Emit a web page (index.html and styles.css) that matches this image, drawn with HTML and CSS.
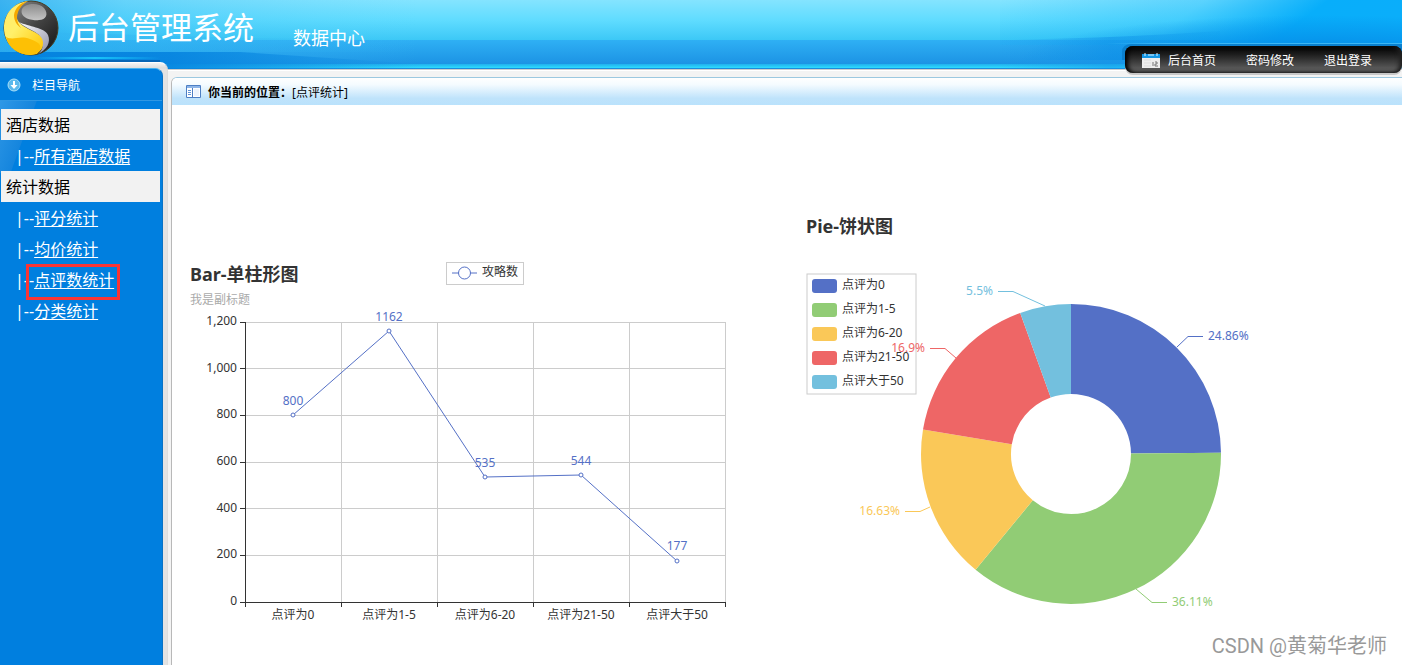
FILE: index.html
```html
<!DOCTYPE html>
<html lang="zh-CN">
<head>
<meta charset="utf-8">
<title>后台管理系统</title>
<link rel="stylesheet" href="styles.css">
</head>
<body>
<header class="top">
  <svg class="art art-left" width="420" height="69" viewBox="0 0 420 69" aria-hidden="true">
    <defs>
      <linearGradient id="l1" x1="0" x2="1" y1="0" y2="0"><stop offset="0" stop-color="#1397e8" stop-opacity=".65"/><stop offset=".3" stop-color="#2fb5f2" stop-opacity=".35"/><stop offset="1" stop-color="#4ccaf8" stop-opacity="0"/></linearGradient>
      <linearGradient id="l2" x1="0" x2="1" y1="0" y2="0"><stop offset="0" stop-color="#0583df"/><stop offset=".4" stop-color="#0583df" stop-opacity=".9"/><stop offset="1" stop-color="#0583df" stop-opacity="0"/></linearGradient>
      <linearGradient id="l3" x1="0" x2="1" y1="0" y2="0"><stop offset="0" stop-color="#18c5fa" stop-opacity="0"/><stop offset=".5" stop-color="#18c5fa"/><stop offset="1" stop-color="#18c5fa" stop-opacity="0"/></linearGradient>
      <linearGradient id="l4" x1="0" x2="1" y1="0" y2="0"><stop offset="0" stop-color="#34b5f2" stop-opacity=".6"/><stop offset="1" stop-color="#34b5f2" stop-opacity="0"/></linearGradient>
    </defs>
    <path d="M0 0H420V69H0Z" fill="url(#l1)"/>
    <path d="M0 31L250 38L420 40V52H0Z" fill="url(#l4)"/>
    <path d="M0 52H240L420 64V69H0Z" fill="url(#l2)"/>
    <rect x="30" y="57" width="130" height="2" fill="url(#l3)"/>
    <path d="M0 61H160" stroke="#0765b5" stroke-width="2"/>
  </svg>
  <svg class="art art-right" width="402" height="69" viewBox="0 0 402 69" aria-hidden="true">
    <defs>
      <linearGradient id="r1" x1="0" x2="1" y1="0" y2=".15"><stop offset="0" stop-color="#10b2fa" stop-opacity="0"/><stop offset=".5" stop-color="#10b2fa" stop-opacity=".35"/><stop offset=".8" stop-color="#08aefa"/><stop offset="1" stop-color="#0aaefa"/></linearGradient>
      <linearGradient id="r2" x1="0" x2="1" y1="0" y2="0"><stop offset="0" stop-color="#1d98e8" stop-opacity="0"/><stop offset=".5" stop-color="#1496e9" stop-opacity=".55"/><stop offset="1" stop-color="#0795eb" stop-opacity=".1"/></linearGradient>
      <radialGradient id="r3" cx=".8" cy="1" r=".75"><stop offset="0" stop-color="#058ae6"/><stop offset=".4" stop-color="#058ae6" stop-opacity=".7"/><stop offset="1" stop-color="#058ae6" stop-opacity="0"/></radialGradient>
      <linearGradient id="r4" x1="0" x2="1" y1="0" y2="0"><stop offset="0" stop-color="#3cb7f4" stop-opacity="0"/><stop offset=".2" stop-color="#3cb7f4"/></linearGradient>
    </defs>
    <path d="M0 0H402V45H0Z" fill="url(#r1)"/>
    <path d="M0 40Q120 38 220 31V69H0Z" fill="url(#r2)"/>
    <path d="M0 0H402V60H0Z" fill="url(#r3)"/>
    <path d="M122 52Q122 44 132 44H402V60H122Z" fill="#0a7ac5" opacity=".75"/>
    <rect x="105" y="43" width="297" height="1" fill="url(#r4)"/>
  </svg>
  <div class="brand">
    <svg class="logo" width="58" height="56" viewBox="0 0 58 56" role="img" aria-label="标志">
      <defs>
        <linearGradient id="dark" x1="0" x2="1" y1="0" y2="1"><stop offset="0" stop-color="#999"/><stop offset=".5" stop-color="#444"/><stop offset="1" stop-color="#111"/></linearGradient>
        <linearGradient id="gold" x1="0" x2="1" y1="0" y2="1"><stop offset="0" stop-color="#ffe96a"/><stop offset=".4" stop-color="#fff06a"/><stop offset="1" stop-color="#ffc400"/></linearGradient>
        <linearGradient id="gloss" x1="0" x2="0" y1="0" y2="1"><stop offset="0" stop-color="#8c8c8c"/><stop offset="1" stop-color="#c4c4c4"/></linearGradient>
        <linearGradient id="silver" x1="0" x2="1" y1="0" y2="1"><stop offset="0" stop-color="#fff"/><stop offset="1" stop-color="#8f90a8"/></linearGradient>
      </defs>
      <circle cx="29" cy="28" r="27" fill="url(#dark)" stroke="#463c20"/>
      <path d="M26 1C11 3 2 14 2 28C2 43 14 55 29 55C39 54 43 46 41 39C37 31 19 29 15 19C14 11 18 5 26 1Z" fill="url(#gold)"/>
      <path d="M26 1C18 3 13 8 12 15C12 21 15 25 19 28C17 25 15 22 15 18C15 11 19 5 26 1Z" fill="#f5a800"/>
      <path d="M17 22C25 30 40 32 41 42C41 47 40 51 36 54C45 50 49 42 46 35C42 27 27 27 17 22Z" fill="url(#silver)"/>
      <path d="M20 9C23 3 37 2 42 8C47 14 44 20 37 20C30 21 17 18 20 9Z" fill="url(#gloss)"/>
      <path d="M4 37C12 41 17 35 28 39C40 43 41 48 35 54C20 57 7 50 4 37Z" fill="#fdc005"/>
    </svg>
    <h1 class="brand-name">后台管理系统</h1>
    <span class="brand-sub">数据中心</span>
  </div>
  <nav class="quick">
    <a class="quick-link" href="#">
      <svg width="18" height="16" viewBox="0 0 18 16" aria-hidden="true"><path d="M0 2H18V15H0Z" fill="#eee"/><path d="M0 1H18V5H0Z" fill="#1597e5"/><path d="M3 0V3M15 0V3M6 2H12" stroke="#dff4ff"/><path d="M2 7H9M2 10H9M2 13H9" stroke="#ddd"/><path d="M11 9V13M13 9H15V11H13V13H16" stroke="#777" fill="none"/></svg>
      后台首页</a>
    <a class="quick-link" href="#">密码修改</a>
    <a class="quick-link" href="#">退出登录</a>
  </nav>
</header>

<div class="body">
  <aside class="side">
    <div class="side-panel">
      <h2 class="side-title">
        <svg width="14" height="14" viewBox="0 0 14 14" aria-hidden="true"><circle cx="7" cy="7" r="6" fill="#5bb9ec" stroke="#a8def8"/><path d="M7 3V9" stroke="#fff" stroke-width="2"/><path d="M3.500 7H10.500L7 11Z" fill="#fff"/></svg>
        栏目导航</h2>
      <div class="menu">
        <h3 class="menu-head">酒店数据</h3>
        <div class="menu-item">|--<a href="#">所有酒店数据</a></div>
        <h3 class="menu-head">统计数据</h3>
        <div class="menu-item">|--<a href="#">评分统计</a></div>
        <div class="menu-item">|--<a href="#">均价统计</a></div>
        <div class="menu-item marked">|--<a href="#">点评数统计</a></div>
        <div class="menu-item">|--<a href="#">分类统计</a></div>
      </div>
    </div>
  </aside>

  <main class="content">
    <div class="crumb">
      <svg width="15" height="13" viewBox="0 0 15 13" aria-hidden="true"><path d="M.5 .5H14.500V12.500H.5Z" fill="#fff" stroke="#4d7fc4"/><path d="M1 1H14V3H1Z" fill="#8db5e8"/><path d="M6.500 3V12" stroke="#4d7fc4"/><path d="M2 5.500H5M2 7.500H5M2 9.500H5" stroke="#5f93d6"/><path d="M8 4H13V11H8Z" fill="#edf4fd"/></svg>
      <b>你当前的位置：</b><span>[点评统计]</span>
    </div>
    <div class="charts">
      <svg class="chart" width="616" height="380" viewBox="172 255 616 380" role="img" aria-label="单柱形图">
        <text class="title" x="190" y="281">Bar-单柱形图</text>
        <text class="subtitle" x="190" y="304">我是副标题</text>
        <rect x="446.500" y="262.500" width="77" height="22" fill="#fff" stroke="#ccc"/>
        <path class="series" d="M452 273H477"/><circle class="dot" cx="464.500" cy="273" r="6"/>
        <text x="482" y="276">攻略数</text>
        <path class="grid" d="M246 322.500H726M246 368.500H726M246 415.500H726M246 462.500H726M246 508.500H726M246 555.500H726M341.500 322V602M437.500 322V602M533.500 322V602M629.500 322V602M725.500 322V602"/>
        <path class="axis" d="M245.500 322V607M240 602.500H726M240 322.500H245M240 368.500H245M240 415.500H245M240 462.500H245M240 508.500H245M240 555.500H245M341.500 602V607M437.500 602V607M533.500 602V607M629.500 602V607M725.500 602V607"/>
        <g class="end"><text x="237" y="325">1,200</text><text x="237" y="372">1,000</text><text x="237" y="418">800</text><text x="237" y="465">600</text><text x="237" y="512">400</text><text x="237" y="558">200</text><text x="237" y="605">0</text></g>
        <g class="mid"><text x="293" y="619">点评为0</text><text x="389" y="619">点评为1-5</text><text x="485" y="619">点评为6-20</text><text x="581" y="619">点评为21-50</text><text x="677" y="619">点评大于50</text></g>
        <path class="series" d="M293 415L389 331L485 477L581 475L677 561"/>
        <circle class="dot" cx="293" cy="415" r="2"/><circle class="dot" cx="389" cy="331" r="2"/><circle class="dot" cx="485" cy="477" r="2"/><circle class="dot" cx="581" cy="475" r="2"/><circle class="dot" cx="677" cy="561" r="2"/>
        <g class="mid c-blue"><text x="293" y="405">800</text><text x="389" y="321">1162</text><text x="485" y="467">535</text><text x="581" y="465">544</text><text x="677" y="550">177</text></g>
      </svg>
      <svg class="chart" width="614" height="430" viewBox="788 205 614 430" role="img" aria-label="饼状图">
        <text class="title" x="806" y="233">Pie-饼状图</text>
        <rect x="807" y="274" width="109" height="120" fill="#fff" stroke="#ccc"/>
        <rect class="c-blue" x="812" y="279" width="25" height="14" rx="3"/><text x="842" y="289">点评为0</text>
        <rect class="c-green" x="812" y="303" width="25" height="14" rx="3"/><text x="842" y="313">点评为1-5</text>
        <rect class="c-yellow" x="812" y="327" width="25" height="14" rx="3"/><text x="842" y="337">点评为6-20</text>
        <rect class="c-red" x="812" y="351" width="25" height="14" rx="3"/><text x="842" y="361">点评为21-50</text>
        <rect class="c-cyan" x="812" y="375" width="25" height="14" rx="3"/><text x="842" y="385">点评大于50</text>
        <path class="c-blue" d="M1071 304A150 150 0 0 1 1221 452.700L1131 453.500A60 60 0 0 0 1071 394Z"/>
        <path class="c-green" d="M1221 452.700A150 150 0 0 1 975.600 569.700L1032.800 500.300A60 60 0 0 0 1131 453.500Z"/>
        <path class="c-yellow" d="M975.600 569.700A150 150 0 0 1 923 429.600L1011.800 444.200A60 60 0 0 0 1032.800 500.300Z"/>
        <path class="c-red" d="M923 429.600A150 150 0 0 1 1020.200 312.900L1050.700 397.500A60 60 0 0 0 1011.800 444.200Z"/>
        <path class="c-cyan" d="M1020.200 312.900A150 150 0 0 1 1071 304V394A60 60 0 0 0 1050.700 397.500Z"/>
        <g fill="none"><path stroke="#5470c6" d="M1177 347L1188 336.500H1203"/><path stroke="#91cc75" d="M1136 589L1152 602.500H1167"/><path stroke="#fac858" d="M930 507L920 511.500H905"/><path stroke="#ee6666" d="M956 358L945 348.500H930"/><path stroke="#73c0de" d="M1045 306L1013 291.500H998"/></g>
        <text class="c-blue" x="1208" y="340">24.86%</text>
        <text class="c-green" x="1172" y="606">36.11%</text>
        <g class="end"><text class="c-yellow" x="900" y="515">16.63%</text><text class="c-red" x="925" y="352">16.9%</text><text class="c-cyan" x="993" y="295">5.5%</text></g>
      </svg>
    </div>
    <div class="watermark">CSDN @黄菊华老师</div>
  </main>
</div>
</body>
</html>
```
FILE: styles.css
```css
*, *::after { box-sizing: border-box; }
body {
  margin: 0;
  min-height: 100vh;
  display: flex;
  flex-direction: column;
  background: #f3f3f3;
  font-family: "Noto Sans", "Noto Sans CJK SC", sans-serif;
  font-size: 12px;
  color: #000;
}
h1, h2, h3 { margin: 0; font-weight: 400; }

.top {
  position: relative;
  height: 71px;
  display: flex;
  justify-content: space-between;
  background: linear-gradient(#84e4ff 0, #60dcff 20px, #3cc8f6 40px, #2fb0f4 40px, #1c93e4 64px, #20b0ee 64px, #2edcff 68px, #1a8ddc 68px, #1a8ddc 69px, #ccc 69px, #ccc 70px, #fff 70px);
}
.art { position: absolute; top: 0; }
.art-left { left: 0; }
.art-right { right: 0; }
.brand { position: relative; display: flex; align-items: flex-start; color: #fff; }
.logo { margin-left: 2px; }
.brand-name {
  margin-left: 8px;
  font-size: 31px;
  line-height: 54px;
  font-weight: 400;
}
.brand-sub { margin-left: 39px; padding-top: 25px; font-size: 18px; line-height: 26px; }
.quick {
  position: relative;
  align-self: flex-end;
  width: 277px;
  height: 27px;
  margin-bottom: -2px;
  padding: 2px 0 0 17px;
  display: flex;
  align-items: center;
  gap: 30px;
  border-radius: 8px;
  background: linear-gradient(#000, #1c1c1c 30%, #6c6c6c);
  box-shadow: inset 3px 0 4px #000, inset -3px 0 4px #222, 0 2px 0 #c8c8c8;
}
.quick-link {
  display: flex;
  align-items: center;
  gap: 8px;
  line-height: 18px;
  color: #fff;
  text-decoration: none;
}

.body { flex: 1; display: flex; }
.side {
  position: relative;
  width: 168px;
  flex: none;
  margin-top: -9px;
  padding: 5px 4px 0 0;
  display: flex;
  border-top: 1px solid #fff;
  border-right: 1px solid #ddd;
  border-radius: 0 8px 0 0;
  background: linear-gradient(#f4f4f4, #ddd 5px, #e2e2e2 6px);
}
.side-panel {
  flex: 1;
  border-top: 1px solid #46b2ef;
  border-right: 1px solid #0872c6;
  border-radius: 0 8px 0 0;
  background:
    linear-gradient(110deg, #2f98e6 0, #1585dd 34px, transparent 35px) 0 32px / 100% 72px no-repeat,
    #007fdf;
}
.side-title {
  height: 32px;
  padding-left: 7px;
  display: flex;
  align-items: center;
  gap: 11px;
  border-bottom: 1px solid #2f97e3;
  border-radius: 0 8px 0 0;
  background: #007fdf;
  font-size: 12px;
  color: #fff;
}
.menu { padding: 8px 2px 0 1px; font-size: 16px; line-height: 31px; }
.menu-head { padding: 1px 5px 0; font-size: 16px; line-height: 30px; background: #f2f2f2; }
.menu-item { height: 31px; padding: 1px 0 0 14px; color: #fff; white-space: nowrap; }
.menu-item a { color: #fff; text-underline-offset: 2px; }
.marked { position: relative; }
.marked::after {
  content: "";
  position: absolute;
  left: 25px;
  top: 0;
  width: 94px;
  height: 36px;
  border: 3px solid #fa3434;
}

.content {
  position: relative;
  flex: 1;
  min-width: 0;
  margin: 6px 0 0 3px;
  border-top: 1px solid #9cc8e0;
  border-left: 1px solid #b8b8b8;
  border-radius: 6px 0 0 0;
  background: #fff;
  overflow: hidden;
}
.crumb {
  height: 27px;
  padding-left: 14px;
  display: flex;
  align-items: center;
  background: linear-gradient(#fff, #f4fbff 25%, #bfe3fb 75%, #bae2fc);
}
.crumb svg { margin-right: 7px; }
.charts { padding-top: 100px; display: flex; align-items: flex-end; }
.chart { flex: none; display: block; fill: #333; font-size: 12px; }
.title { font-size: 18px; font-weight: 700; }
.subtitle { fill: #aaa; }
.mid { text-anchor: middle; }
.end { text-anchor: end; }
.grid { stroke: #ccc; fill: none; }
.axis { stroke: #333; fill: none; }
.series { stroke: #5470c6; fill: none; }
.dot { stroke: #5470c6; fill: #fff; }
.c-blue { fill: #5470c6; }
.c-green { fill: #91cc75; }
.c-yellow { fill: #fac858; }
.c-red { fill: #ee6666; }
.c-cyan { fill: #73c0de; }
.watermark {
  position: absolute;
  right: 15px;
  bottom: 4px;
  font-family: Roboto, "Noto Sans CJK SC", sans-serif;
  font-size: 20px;
  line-height: 30px;
  color: #999;
}
```
